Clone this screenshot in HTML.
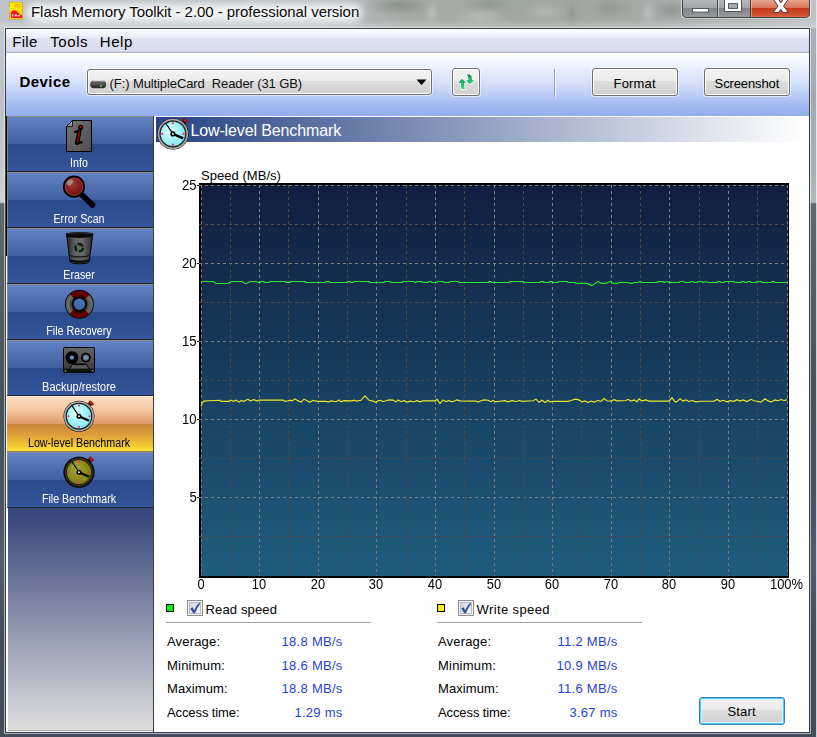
<!DOCTYPE html>
<html><head><meta charset="utf-8"><title>Flash Memory Toolkit</title>
<style>
html,body{margin:0;padding:0;}
body{width:817px;height:737px;overflow:hidden;position:relative;background:#4a5558;font-family:"Liberation Sans",sans-serif;}
.abs{position:absolute;}
.t{position:absolute;white-space:pre;line-height:1;font-family:"Liberation Sans",sans-serif;color:#000;}
.btn{position:absolute;box-sizing:border-box;border:1px solid #707070;border-radius:3px;background:linear-gradient(#f3f3f3 0%,#ebebeb 46%,#dddddd 48%,#cfcfcf 100%);box-shadow:inset 0 0 0 1px #fcfcfc, 0 0 0 1px rgba(255,255,255,.55);}
.sb{position:absolute;left:7px;width:146px;height:56px;}
.sb .bg{position:absolute;left:0;top:0;width:146px;height:56px;background:linear-gradient(#8c8c8c 0,#8c8c8c 1px,#6282c4 1px,#4160a2 28px,#2b4a8b 28px,#36559b 55px,#26262c 55px,#26262c 56px);}
.sb .bg:after{content:"";position:absolute;left:0;top:0;width:1px;height:55px;background:#8a8680;}
.sb.sel .bg{background:linear-gradient(#fff1e2 0,#fff1e2 1px,#fbddc2 1px,#f5c8a2 13px,#de9a68 28px,#c9853c 28px,#dfa23a 40px,#f2c834 49px,#fbe034 55px,#84846c 55px,#84846c 56px);}
.sb.sel .bg:after{display:none;}
.sb svg{position:absolute;left:0;top:0;}
.lab{position:absolute;left:-1px;width:146px;text-align:center;top:41px;font-size:12px;line-height:12px;color:#fff;white-space:pre;transform:scaleX(.89);}
.sl{font-size:13px;}
.sv{font-size:13px;color:#1f3fe0;}
</style></head><body>
<!-- window frame (aero glass) -->
<div class="abs" style="left:0;top:0;width:817px;height:737px;background:linear-gradient(#c4ccd4 0px,#bcc2c8 100px,#c6c9cc 170px,#d2d4d6 202px,#5e6a6c 204px,#566264 260px,#46525a 400px,#4a5462 520px,#525c6c 560px,#424e58 640px,#444e5a 737px);"></div>
<div class="abs" style="left:0;top:0;width:817px;height:28px;background:linear-gradient(90deg,#bcc2c8 0px,#b8bec4 40px,#b6bcc0 330px,#a8aca8 400px,#a0a6a0 520px,#a6aaa7 640px,#aeb2b0 700px,#bec2c4 817px);"></div>
<div class="abs" style="left:0;top:19px;width:817px;height:9px;background:linear-gradient(rgba(255,255,255,0),rgba(255,255,255,.28));"></div>
<div class="abs" style="left:26px;top:4px;width:336px;height:18px;border-radius:9px;background:rgba(255,255,255,.82);filter:blur(5px);"></div>
<div class="abs" style="left:360px;top:0;width:330px;height:28px;overflow:hidden;">
 <div class="abs" style="left:0;top:0;width:330px;height:28px;filter:blur(2.5px);background:
  radial-gradient(ellipse 34px 10px at 40px 5px,rgba(118,128,116,.7),rgba(118,128,116,0) 100%),
  radial-gradient(ellipse 5px 16px at 72px 14px,rgba(206,210,210,.75),rgba(206,210,210,0) 100%),
  radial-gradient(ellipse 30px 9px at 120px 17px,rgba(196,200,196,.7),rgba(196,200,196,0) 100%),
  radial-gradient(ellipse 24px 8px at 128px 4px,rgba(124,134,124,.55),rgba(124,134,124,0) 100%),
  radial-gradient(ellipse 26px 10px at 185px 12px,rgba(190,194,190,.6),rgba(190,194,190,0) 100%),
  radial-gradient(ellipse 5px 15px at 212px 14px,rgba(120,130,124,.55),rgba(120,130,124,0) 100%),
  radial-gradient(ellipse 22px 9px at 250px 8px,rgba(128,138,128,.6),rgba(128,138,128,0) 100%),
  radial-gradient(ellipse 6px 16px at 288px 14px,rgba(204,208,208,.7),rgba(204,208,208,0) 100%),
  radial-gradient(ellipse 18px 10px at 312px 10px,rgba(122,130,126,.6),rgba(122,130,126,0) 100%);"></div>
</div>
<div class="abs" style="left:811px;top:28px;width:5px;height:175px;background:rgba(40,50,50,.16);"></div>
<div class="abs" style="left:816px;top:0;width:1px;height:737px;background:rgba(235,240,245,.8);"></div>
<!-- inner frame edges -->
<div class="abs" style="left:4px;top:27px;width:807px;height:707px;box-sizing:border-box;border:1px solid rgba(238,241,245,.62);"></div>
<div class="abs" style="left:5px;top:28px;width:805px;height:705px;box-sizing:border-box;border:1px solid #3a3f44;"></div>
<!-- app icon -->
<svg class="abs" style="left:8px;top:1px" width="17" height="20" viewBox="8 1 17 20">
 <defs><linearGradient id="gsd" x1="0" y1="0" x2="1" y2="1"><stop offset="0" stop-color="#fff200"/><stop offset=".6" stop-color="#ffe000"/><stop offset="1" stop-color="#ffc400"/></linearGradient></defs>
 <path d="M9.3 2 L21 2 L22.8 3.8 L22.8 19.6 L9.3 19.6 Z" fill="#a8ac10"/>
 <path d="M9.9 2.5 L20.8 2.5 L22.2 3.9 L22.2 19 L9.9 19 Z" fill="url(#gsd)"/>
 <path d="M10.8 18 L10.8 12.6 Q12.6 9.4 15.4 10.6 Q17.4 11.6 18.4 13.2 Q20 15 22 15.2 L22 18 Z" fill="#fb0c10"/>
 <rect x="12" y="14.2" width="1.2" height="2.2" fill="#fff"/><rect x="13.8" y="15.6" width=".7" height=".8" fill="#fff"/><rect x="15" y="14.2" width="1.8" height="2.2" rx=".6" fill="#fff"/><rect x="17.4" y="14.9" width="2.6" height="1.5" rx=".5" fill="#ffd0c8"/>
 <path d="M14.6 5.2 Q16.4 4 19 4.6 M19.4 4.6 Q20.8 5 20 6.4 Q19.4 7 18.4 6.8 M14.8 6.4 Q16 5.6 17.6 6" stroke="#ff9a10" stroke-width=".9" fill="none"/>
 <rect x="10.8" y="8.2" width="4" height=".5" fill="#b8a800" opacity=".8"/>
 <rect x="9" y="7" width=".9" height="2.6" fill="#d8dce8" opacity=".9"/>
</svg>
<div class="t" style="left:31px;top:3.5px;font-size:15px;letter-spacing:-0.05px;color:#0a0a0a;text-shadow:0 0 6px #fff,0 0 10px #fff;">Flash Memory Toolkit - 2.00 - professional version</div>
<!-- caption buttons -->
<svg class="abs" style="left:677px;top:0" width="140" height="24" viewBox="677 0 140 24">
 <defs>
  <linearGradient id="cbg" x1="0" y1="0" x2="0" y2="1"><stop offset="0" stop-color="#b4b8ba"/><stop offset=".44" stop-color="#a2a6a8"/><stop offset=".45" stop-color="#7e8588"/><stop offset="1" stop-color="#9a9ea0"/></linearGradient>
  <linearGradient id="cbr" x1="0" y1="0" x2="0" y2="1"><stop offset="0" stop-color="#e6a38c"/><stop offset=".44" stop-color="#d9755a"/><stop offset=".45" stop-color="#c4391a"/><stop offset=".8" stop-color="#d0502e"/><stop offset="1" stop-color="#dc6c48"/></linearGradient>
  <clipPath id="cbclip"><path d="M682 -2 H810 V13 Q810 17.5 805.5 17.5 H686.5 Q682 17.5 682 13 Z"/></clipPath>
 </defs>
 <path d="M681 -2 H811 V13.5 Q811 18.5 806 18.5 H686 Q681 18.5 681 13.5 Z" fill="rgba(255,255,255,.55)"/>
 <g clip-path="url(#cbclip)">
  <rect x="682" y="0" width="68.5" height="18" fill="url(#cbg)"/>
  <rect x="750.5" y="0" width="60" height="18" fill="url(#cbr)"/>
 </g>
 <path d="M682.5 -2 V13 Q682.5 17.5 687 17.5 H805 Q809.5 17.5 809.5 13 V-2" fill="none" stroke="#43484c" stroke-width="1"/>
 <path d="M717.5 0 V17" stroke="#4a4e52" stroke-width="1"/><path d="M718.5 0 V17" stroke="rgba(255,255,255,.45)" stroke-width="1"/>
 <path d="M750.5 0 V17" stroke="#5a3028" stroke-width="1"/><path d="M751.5 0 V17" stroke="rgba(255,220,210,.45)" stroke-width="1"/>
 <rect x="692.5" y="8.5" width="16" height="3.6" fill="#fff" stroke="#51585e" stroke-width="1"/>
 <path d="M724.5 -2 H741.5 V11.5 H724.5 Z M728.5 3.5 V8.5 H737.5 V3.5 Z" fill="#fff" fill-rule="evenodd" stroke="#51585e" stroke-width="1"/>
 <path d="M773.2 -1 L778.4 -1 L780.8 3 L783.2 -1 L788.4 -1 L783.6 6 L788.6 12.6 L783 12.6 L780.8 9.4 L778.6 12.6 L773 12.6 L778 6 Z" fill="#fff" stroke="#5a342c" stroke-width="1" stroke-linejoin="round"/>
</svg>
<!-- client area -->
<div class="abs" style="left:6px;top:29px;width:803px;height:703px;background:#fff;"></div>
<!-- menu bar -->
<div class="abs" style="left:6px;top:29px;width:803px;height:24px;background:linear-gradient(#ffffff 0,#f1f3fa 5px,#e9ecf6 9px,#dde1f0 9px,#d9ddee 22px,#b4bace 23px,#b4bace 24px);"></div>
<div class="t" style="left:12.2px;top:34px;font-size:15px;letter-spacing:0.3px;">File</div>
<div class="t" style="left:50.3px;top:34px;font-size:15px;letter-spacing:0.55px;">Tools</div>
<div class="t" style="left:99.8px;top:34px;font-size:15px;letter-spacing:0.55px;">Help</div>
<!-- toolbar -->
<div class="abs" style="left:6px;top:53px;width:803px;height:63px;background:linear-gradient(#ffffff 0,#f4f7fe 8px,#d5e0fa 30px,#acc1f4 48px,#92adee 63px);"></div>
<div class="t" style="left:19.4px;top:74px;font-size:15px;font-weight:bold;letter-spacing:0.45px;">Device</div>
<!-- combo -->
<div class="btn" style="left:87px;top:69px;width:345px;height:26px;"></div>
<svg class="abs" style="left:88px;top:77px" width="20" height="14" viewBox="88 77 20 14">
 <defs><linearGradient id="gdrv" x1="0" y1="0" x2="0" y2="1"><stop offset="0" stop-color="#8a8a8a"/><stop offset=".35" stop-color="#4a4a4a"/><stop offset="1" stop-color="#2a2a2a"/></linearGradient></defs>
 <path d="M93.4 80.2 H103 Q105.6 80.6 106.2 84 Q106.4 87.4 103.6 88.2 H92.8 Q90 87.4 90.2 84 Q90.8 80.6 93.4 80.2 Z" fill="url(#gdrv)"/>
 <path d="M93 81 Q98.2 80 103.4 81" stroke="#e4e4e4" stroke-width="1.1" fill="none"/>
 <path d="M91.4 84.4 Q98.2 83.2 105 84.4" stroke="#7a7a7a" stroke-width=".7" fill="none"/>
 <rect x="100" y="85.2" width="2" height="1.4" fill="#30f040"/>
</svg>
<div class="t" style="left:109.6px;top:76.5px;font-size:13px;letter-spacing:-0.1px;color:#101010;">(F:) MultipleCard  Reader (31 GB)</div>
<svg class="abs" style="left:416px;top:79px" width="12" height="8" viewBox="0 0 12 8"><path d="M0.5 0.5 L10.5 0.5 L5.5 6 Z" fill="#000"/></svg>
<!-- refresh button -->
<div class="btn" style="left:452px;top:68px;width:28px;height:28px;"></div>
<svg class="abs" style="left:452px;top:68px" width="28" height="28" viewBox="452 68 28 28">
 <defs><linearGradient id="garr" x1="0" y1="0" x2="0" y2="1"><stop offset="0" stop-color="#1f9c58"/><stop offset="1" stop-color="#34d684"/></linearGradient>
 <linearGradient id="garr2" x1="0" y1="0" x2="0" y2="1"><stop offset="0" stop-color="#0c6a34"/><stop offset=".4" stop-color="#22b468"/><stop offset="1" stop-color="#2cc878"/></linearGradient></defs>
 <g stroke="#fff" stroke-width="1.6" stroke-linejoin="round" opacity=".95">
  <path d="M462 78.8 L466.2 83 L464.2 83 L464.2 86.4 Q464.4 88 465.4 89 L462 89 Q461 87.6 461 86 L461 83 L458 83 Z" fill="#fff"/>
  <path d="M466.8 74.2 Q469.6 74.2 471 75.6 Q471.9 76.8 471.9 78.4 L471.9 80.2 L474.4 80.2 L469.7 84.2 L465.7 80.2 L468.4 80.2 L468.4 78.4 Q468.4 76 466.8 74.2 Z" fill="#fff"/>
 </g>
 <path d="M462 78.8 L466.2 83 L464.2 83 L464.2 86.4 Q464.4 88 465.4 89 L462 89 Q461 87.6 461 86 L461 83 L458 83 Z" fill="url(#garr)"/>
 <path d="M466.8 74.2 Q469.6 74.2 471 75.6 Q471.9 76.8 471.9 78.4 L471.9 80.2 L474.4 80.2 L469.7 84.2 L465.7 80.2 L468.4 80.2 L468.4 78.4 Q468.4 76 466.8 74.2 Z" fill="url(#garr2)"/>
</svg>
<!-- separator -->
<div class="abs" style="left:554px;top:69px;width:1px;height:28px;background:#9aa0a8;"></div>
<div class="abs" style="left:555px;top:69px;width:1px;height:28px;background:#f4f6fc;"></div>
<!-- buttons -->
<div class="btn" style="left:592px;top:68px;width:86px;height:28px;"></div>
<div class="t" style="left:613.6px;top:76.5px;font-size:13px;letter-spacing:0.15px;">Format</div>
<div class="btn" style="left:704px;top:68px;width:86px;height:28px;"></div>
<div class="t" style="left:714.6px;top:76.5px;font-size:13px;letter-spacing:-0.12px;">Screenshot</div>
<!-- sidebar -->
<div class="abs" style="left:6px;top:116px;width:1px;height:616px;background:linear-gradient(#000 0,#000 140px,#fff 140px,#fff 616px);"></div>
<div class="abs" style="left:7px;top:116px;width:146px;height:616px;background:linear-gradient(#33508e 0,#33508e 392px,#34437a 393px,#dedede 614px,#a6a6a6 614px,#a6a6a6 615px,#fff 615px,#fff 616px);"></div><div class="abs" style="left:7px;top:508px;width:1px;height:224px;background:#fff;"></div>
<div class="abs" style="left:153px;top:116px;width:1px;height:616px;background:#3c3c40;"></div>
<svg width="0" height="0" style="position:absolute"><defs>
 <linearGradient id="gpage" x1="0" y1="0" x2="1" y2="1"><stop offset="0" stop-color="#767676"/><stop offset="1" stop-color="#4c4c4c"/></linearGradient>
 <radialGradient id="gred" cx=".4" cy=".35" r=".7"><stop offset="0" stop-color="#a04040"/><stop offset=".6" stop-color="#861818"/><stop offset="1" stop-color="#700a0a"/></radialGradient>
 <linearGradient id="gcan" x1="0" y1="0" x2="1" y2="0"><stop offset="0" stop-color="#202020"/><stop offset=".32" stop-color="#626262"/><stop offset=".6" stop-color="#6a6a6a"/><stop offset="1" stop-color="#262626"/></linearGradient>
 <radialGradient id="gring" gradientUnits="userSpaceOnUse" cx="72.4" cy="20.2" r="14.4"><stop offset=".44" stop-color="#000"/><stop offset=".62" stop-color="#505050"/><stop offset=".76" stop-color="#6c6c6c"/><stop offset=".9" stop-color="#606060"/><stop offset="1" stop-color="#2c2c2c"/></radialGradient>
 <radialGradient id="gringr" gradientUnits="userSpaceOnUse" cx="72.4" cy="20.2" r="14.4"><stop offset=".44" stop-color="#0c0000"/><stop offset=".62" stop-color="#4c0000"/><stop offset=".76" stop-color="#6c0000"/><stop offset=".9" stop-color="#5a0000"/><stop offset="1" stop-color="#240000"/></radialGradient>
 <linearGradient id="gtape" x1="0" y1="0" x2="0" y2="1"><stop offset="0" stop-color="#626262"/><stop offset="1" stop-color="#383838"/></linearGradient>
 <radialGradient id="gface" cx=".4" cy=".4" r=".65"><stop offset="0" stop-color="#e8ffff"/><stop offset=".5" stop-color="#a8f4f8"/><stop offset="1" stop-color="#7ee6f0"/></radialGradient>
 <radialGradient id="gfacey" cx=".4" cy=".4" r=".65"><stop offset="0" stop-color="#a4a43a"/><stop offset=".6" stop-color="#8c8c1c"/><stop offset="1" stop-color="#74740c"/></radialGradient>
 <g id="watch">
  <path d="M9.2 -12.6 L11.6 -10.2" stroke="#222" stroke-width="2.4"/>
  <path d="M10.6 -14.6 L13.8 -11.4 L12.4 -10 L9.2 -13.2 Z" fill="#e01414" stroke="#400" stroke-width=".7"/>
  <circle r="14.6" fill="#111"/>
  <circle r="13.4" fill="none" stroke="#a8a8a8" stroke-width="1.6"/>
  <circle r="11.9" fill="none" stroke="#333" stroke-width=".9"/>
 </g>
 <g id="hands">
  <circle cx="0" cy="-10" r="1" fill="#ff2878"/><circle cx="0" cy="10" r="1" fill="#ff2878"/><circle cx="-10" cy="0" r="1" fill="#ff2878"/><circle cx="10" cy="0" r="1" fill="#ff2878"/>
  <path d="M0 0 L-6.8 -10.2" stroke="#000" stroke-width="1.1"/>
  <path d="M0 0 L9.6 4.2" stroke="#000" stroke-width="2.1"/>
  <circle r="2.4" fill="#000"/><circle r=".9" fill="#fff"/>
 </g>
</defs></svg>

<div class="sb" style="top:116px"><div class="bg"></div>
 <svg width="146" height="56" viewBox="0 0 146 56">
  <path d="M59.5 10.5 L65.5 4.5 L84.5 4.5 L84.5 35.5 L59.5 35.5 Z" fill="url(#gpage)" stroke="#000"/>
  <path d="M59.5 10.5 L65.5 10.5 L65.5 4.5 Z" fill="#9a9a9a" stroke="#000" stroke-width=".8"/>
  <circle cx="73.7" cy="11.4" r="2.6" fill="#000"/><ellipse cx="73.5" cy="10.9" rx="1.3" ry=".85" fill="#d00a0a"/>
  <path d="M72.5 15.4 L70.1 26.8" stroke="#000" stroke-width="4.3" stroke-linecap="round"/>
  <path d="M68.2 15.9 L72.4 15" stroke="#000" stroke-width="2.4" stroke-linecap="round"/>
  <path d="M70.4 27 L74.6 26.2" stroke="#000" stroke-width="2.4" stroke-linecap="round"/>
  <path d="M72.4 15.8 L70.3 26.2" stroke="#960404" stroke-width="1.7" stroke-linecap="round"/>
 </svg><div class="lab">Info</div></div>

<div class="sb" style="top:172px"><div class="bg"></div>
 <svg width="146" height="56" viewBox="0 0 146 56">
  <path d="M74 22 L85.4 32.8" stroke="#000" stroke-width="5.8" stroke-linecap="round"/>
  <circle cx="67" cy="14.7" r="10.2" fill="url(#gred)" stroke="#000" stroke-width="1.8"/>
  <circle cx="67" cy="14.7" r="8.7" fill="none" stroke="#b06060" stroke-width=".7" opacity=".7"/>
  <ellipse cx="63" cy="10.5" rx="3.4" ry="2.4" transform="rotate(-40 63 10.5)" fill="#9a9a90" opacity=".85"/>
 </svg><div class="lab">Error Scan</div></div>

<div class="sb" style="top:228px"><div class="bg"></div>
 <svg width="146" height="56" viewBox="0 0 146 56">
  <path d="M59.6 6 L85.8 6 L82.4 32.4 Q82 34.6 79.6 35.2 Q72.6 36.6 65.6 35.2 Q63.2 34.6 62.8 32.4 Z" fill="url(#gcan)" stroke="#000" stroke-width="1"/>
  <path d="M59 5.2 Q72.6 2.6 86.2 5.2 L86 8.6 Q72.6 11.2 59.2 8.6 Z" fill="#0a0a0a"/>
  <path d="M61 5.6 Q72.6 4 84.2 5.6" stroke="#3a3a3a" stroke-width=".8" fill="none"/>
  <path d="M62.4 27.6 Q72.6 30.2 82.8 27.6" stroke="#161616" stroke-width="1.3" fill="none"/>
  <path d="M62.8 31.2 Q72.6 34 82.4 31.2 L82 33.6 Q72.6 36.6 63.2 33.6 Z" fill="#0c0c0c"/>
  <path d="M64.4 30 Q72.6 32 80.8 30" stroke="#4a4a4a" stroke-width=".7" fill="none"/>
  <circle cx="72.1" cy="19.7" r="3.7" fill="none" stroke="#062406" stroke-width="2.4" stroke-dasharray="5.9 1.85"/>
  
 </svg><div class="lab">Eraser</div></div>

<div class="sb" style="top:284px"><div class="bg"></div>
 <svg width="146" height="56" viewBox="0 0 146 56">
  <circle cx="72.4" cy="20.2" r="10.15" fill="none" stroke="#000" stroke-width="8.7"/>
  <circle cx="72.4" cy="20.2" r="10.15" fill="none" stroke="url(#gring)" stroke-width="7.3"/>
  <circle cx="72.4" cy="20.2" r="10.15" fill="none" stroke="url(#gringr)" stroke-width="7.3" stroke-dasharray="15.944 15.944" stroke-dashoffset="-7.972"/>
 </svg><div class="lab">File Recovery</div></div>

<div class="sb" style="top:340px"><div class="bg"></div>
 <svg width="146" height="56" viewBox="0 0 146 56">
  <rect x="56.5" y="7.5" width="31" height="25" rx="1" fill="url(#gtape)" stroke="#000"/>
  <rect x="57" y="28.6" width="30" height="3.6" fill="#101010"/>
  <rect x="60" y="29.6" width="24" height=".8" fill="#0c220c"/>
  <circle cx="58.4" cy="30.8" r=".9" fill="#8a8a8a"/><circle cx="85.6" cy="30.8" r=".9" fill="#8a8a8a"/>
  <path d="M62.6 28.6 L65.2 24.4 L79.4 24.4 L82 28.6" fill="#5a5a5a" stroke="#000" stroke-width="1"/>
  <path d="M68 24.4 L77 24.4" stroke="#000" stroke-width="1.6"/>
  <circle cx="64.9" cy="17.6" r="6.4" fill="#000"/>
  <circle cx="64.9" cy="17.6" r="2.1" fill="#6a92d2"/>
  <circle cx="78.9" cy="17.6" r="4" fill="#6a6a6a" stroke="#000" stroke-width="1.7"/>
  <circle cx="78.9" cy="17.6" r="2" fill="#6a92d2"/>
 </svg><div class="lab" style="transform:scaleX(.915)">Backup/restore</div></div>

<div class="sb sel" style="top:396px"><div class="bg"></div>
 <svg width="146" height="56" viewBox="0 0 146 56">
  <g transform="translate(72 20.2) scale(1.06)"><use href="#watch"/><circle r="11.4" fill="url(#gface)"/>
   <path d="M-7.5 -4 Q-5 -8 -1 -8.6 Q-5 -6.4 -7.5 -4 Z" fill="#fff" opacity=".9"/><path d="M3 7.8 Q6.4 6.6 7.8 3.4 Q6.4 8 3 7.8 Z" fill="#fff" opacity=".9"/>
   <use href="#hands"/></g>
 </svg><div class="lab" style="color:#000">Low-level Benchmark</div></div>

<div class="sb" style="top:452px"><div class="bg"></div>
 <svg width="146" height="56" viewBox="0 0 146 56">
  <g transform="translate(72 20.2) scale(1.06)"><use href="#watch"/><circle r="14.6" fill="#0c0c0c"/><circle r="12.6" fill="none" stroke="#3a3a20" stroke-width="1.2"/><circle r="11.4" fill="url(#gfacey)"/>
   <path d="M-7.5 -4 Q-5 -8 -1 -8.6 Q-5 -6.4 -7.5 -4 Z" fill="#c8c870" opacity=".8"/><path d="M3 7.8 Q6.4 6.6 7.8 3.4 Q6.4 8 3 7.8 Z" fill="#c8c870" opacity=".8"/>
   <use href="#hands"/></g>
 </svg><div class="lab">File Benchmark</div></div>
<!-- main panel header -->
<div class="abs" style="left:156px;top:117px;width:652px;height:25px;background:linear-gradient(90deg,#294684 0px,#2f4b88 30px,#ffffff 648px);"></div>
<svg class="abs" style="left:156px;top:117px" width="36" height="36" viewBox="0 0 36 36"><g transform="translate(16.9 16.9)"><g transform="scale(1.07)"><use href="#watch"/><circle r="11.4" fill="url(#gface)"/><path d="M-7.5 -4 Q-5 -8 -1 -8.6 Q-5 -6.4 -7.5 -4 Z" fill="#fff" opacity=".9"/><path d="M3 7.8 Q6.4 6.6 7.8 3.4 Q6.4 8 3 7.8 Z" fill="#fff" opacity=".9"/><use href="#hands"/></g></g></svg>
<div class="t" style="left:190.4px;top:122.5px;font-size:16px;letter-spacing:-0.12px;color:#fff;">Low-level Benchmark</div>
<div class="t" style="left:201px;top:169px;font-size:13px;letter-spacing:0.04px;">Speed (MB/s)</div>
<div class="abs" style="left:199px;top:183px;width:590px;height:395px;background:#000;"></div>
<div class="abs" style="left:201px;top:185px;width:587px;height:391px;background:linear-gradient(#111f3f 0%,#1f5d7e 100%);"></div>
<svg class="abs" style="left:0;top:0" width="817" height="737" viewBox="0 0 817 737" shape-rendering="crispEdges">
<defs><linearGradient id="gmaj" gradientUnits="userSpaceOnUse" x1="0" y1="185" x2="0" y2="575"><stop offset="0" stop-color="#808080"/><stop offset="1" stop-color="#787878"/></linearGradient><linearGradient id="gmnr" gradientUnits="userSpaceOnUse" x1="0" y1="185" x2="0" y2="575"><stop offset="0" stop-color="#574b40"/><stop offset=".5" stop-color="#504844"/><stop offset="1" stop-color="#484846"/></linearGradient></defs>
<path d="M199 185.5 H788" stroke="url(#gmaj)" stroke-width="1" stroke-dasharray="3 3"/>
<path d="M199 224.5 H788" stroke="url(#gmnr)" stroke-width="1" stroke-dasharray="3 3"/>
<path d="M199 263.5 H788" stroke="url(#gmaj)" stroke-width="1" stroke-dasharray="3 3"/>
<path d="M199 302.5 H788" stroke="url(#gmnr)" stroke-width="1" stroke-dasharray="3 3"/>
<path d="M199 341.5 H788" stroke="url(#gmaj)" stroke-width="1" stroke-dasharray="3 3"/>
<path d="M199 380.5 H788" stroke="url(#gmnr)" stroke-width="1" stroke-dasharray="3 3"/>
<path d="M199 419.5 H788" stroke="url(#gmaj)" stroke-width="1" stroke-dasharray="3 3"/>
<path d="M199 458.5 H788" stroke="url(#gmnr)" stroke-width="1" stroke-dasharray="3 3"/>
<path d="M199 497.5 H788" stroke="url(#gmaj)" stroke-width="1" stroke-dasharray="3 3"/>
<path d="M199 536.5 H788" stroke="url(#gmnr)" stroke-width="1" stroke-dasharray="3 3"/>
<path d="M230.5 185 V576" stroke="url(#gmnr)" stroke-width="1" stroke-dasharray="3 3"/>
<path d="M259.5 185 V576" stroke="url(#gmaj)" stroke-width="1" stroke-dasharray="3 3"/>
<path d="M288.5 185 V576" stroke="url(#gmnr)" stroke-width="1" stroke-dasharray="3 3"/>
<path d="M318.5 185 V576" stroke="url(#gmaj)" stroke-width="1" stroke-dasharray="3 3"/>
<path d="M347.5 185 V576" stroke="url(#gmnr)" stroke-width="1" stroke-dasharray="3 3"/>
<path d="M376.5 185 V576" stroke="url(#gmaj)" stroke-width="1" stroke-dasharray="3 3"/>
<path d="M406.5 185 V576" stroke="url(#gmnr)" stroke-width="1" stroke-dasharray="3 3"/>
<path d="M435.5 185 V576" stroke="url(#gmaj)" stroke-width="1" stroke-dasharray="3 3"/>
<path d="M464.5 185 V576" stroke="url(#gmnr)" stroke-width="1" stroke-dasharray="3 3"/>
<path d="M494.5 185 V576" stroke="url(#gmaj)" stroke-width="1" stroke-dasharray="3 3"/>
<path d="M523.5 185 V576" stroke="url(#gmnr)" stroke-width="1" stroke-dasharray="3 3"/>
<path d="M552.5 185 V576" stroke="url(#gmaj)" stroke-width="1" stroke-dasharray="3 3"/>
<path d="M581.5 185 V576" stroke="url(#gmnr)" stroke-width="1" stroke-dasharray="3 3"/>
<path d="M611.5 185 V576" stroke="url(#gmaj)" stroke-width="1" stroke-dasharray="3 3"/>
<path d="M640.5 185 V576" stroke="url(#gmnr)" stroke-width="1" stroke-dasharray="3 3"/>
<path d="M669.5 185 V576" stroke="url(#gmaj)" stroke-width="1" stroke-dasharray="3 3"/>
<path d="M699.5 185 V576" stroke="url(#gmnr)" stroke-width="1" stroke-dasharray="3 3"/>
<path d="M728.5 185 V576" stroke="url(#gmaj)" stroke-width="1" stroke-dasharray="3 3"/>
<path d="M757.5 185 V576" stroke="url(#gmnr)" stroke-width="1" stroke-dasharray="3 3"/>
<path d="M787.5 185 V576" stroke="url(#gmaj)" stroke-width="1" stroke-dasharray="3 3"/>
<path d="M201.5 185 V576" stroke="url(#gmaj)" stroke-width="1" stroke-dasharray="3 3"/>
<rect x="197" y="185" width="2" height="1" fill="#000"/>
<rect x="197" y="263" width="2" height="1" fill="#000"/>
<rect x="197" y="341" width="2" height="1" fill="#000"/>
<rect x="197" y="419" width="2" height="1" fill="#000"/>
<rect x="197" y="497" width="2" height="1" fill="#000"/>
</svg>
<svg class="abs" style="left:0;top:0" width="817" height="737" viewBox="0 0 817 737">
<path d="M201 281.5 L213 281.5 L216 283.5 L228 283.5 L231 281.5 L242 281.5 L245 283.5 L247 283.3 L250 281.5 L256 281.5 L258 282.4 L260 282.4 L261 281.5 L264 281.5 L265 282.5 L269 282.5 L270 281.5 L285 281.5 L286 282.5 L290 282.5 L291 281.5 L305 281.5 L306 282.5 L325 282.5 L326 281.5 L329 281.5 L330 282.5 L347 282.5 L348 281.5 L350 281.5 L351 282.5 L353 282.5 L354 281.5 L369 281.5 L370 282.5 L384 282.5 L385 281.5 L390 281.5 L391 282.5 L402 282.5 L403 281.5 L414 281.5 L415 282.5 L416 282.5 L417 281.5 L422 281.5 L423 282.5 L428 282.5 L429 281.5 L431 281.5 L432 282.5 L437 282.5 L438 281.5 L443 281.5 L444 282.5 L449 282.5 L450 281.5 L458 281.5 L459 282.5 L488 282.5 L489 281.5 L491 281.5 L492 282.5 L509 282.5 L510 281.5 L523 281.5 L524 282.5 L540 282.5 L541 281.5 L543 281.5 L544 282.5 L549 282.5 L550 281.5 L552 281.5 L553 282.5 L558 282.5 L559 281.5 L567 281.5 L568 282.5 L575 282.5 L576 283.4 L587 283.4 L592 285.6 L598 281.4 L601 283.4 L606 283.4 L608 282.2 L611 281.4 L613 283.2 L617 283.4 L619 282.5 L628 282.5 L630 283.4 L632 283.4 L634 282.5 L638 282.5 L640 281.5 L642 282.5 L657 282.5 L658 281.5 L663 281.5 L664 282.5 L667 281.5 L669 282.5 L679 282.5 L680 281.5 L684 281.5 L685 282.5 L690 282.5 L691 281.5 L693 281.5 L694 282.5 L697 282.5 L698 281.5 L702 281.5 L703 282.5 L706 281.5 L708 282.5 L717 282.5 L718 281.5 L720 281.5 L721 282.5 L724 282.5 L725 281.5 L734 281.5 L735 282.5 L741 282.5 L742 281.5 L744 281.5 L745 282.5 L747 282.5 L748 281.5 L750 281.5 L751 282.5 L756 282.5 L757 281.5 L761 281.5 L762 282.5 L771 282.5 L772 281.5 L774 281.5 L775 282.5 L787 282.5" fill="none" stroke="#26ec2e" stroke-width="1.15"/>
<path d="M201 406.3 L202 403.0 L204 401.1 L208 400.7 L220 400.3 L221 401.3 L229 401.3 L231 400.1 L233 401.3 L236 400.1 L239 402.1 L241 400.7 L244 401.3 L248 399.1 L250 400.9 L254 399.7 L257 401.1 L259 400.1 L283 400.1 L285 401.3 L288 400.7 L290 400.1 L292 400.9 L295 398.9 L297 400.3 L301 402.1 L304 399.1 L307 400.7 L310 402.3 L313 400.3 L317 401.3 L326 401.3 L328 402.1 L331 400.9 L336 401.7 L339 399.9 L341 401.9 L344 400.7 L352 400.9 L354 400.1 L356 401.1 L361 400.3 L365 395.9 L369 400.3 L373 401.1 L376 402.3 L378 400.9 L381 400.3 L383 401.7 L386 400.7 L389 399.9 L393 400.1 L396 401.9 L398 399.9 L401 401.7 L404 400.7 L407 402.1 L410 401.1 L414 401.7 L417 400.7 L420 401.9 L423 400.9 L435 400.9 L437 399.3 L440 403.5 L443 399.9 L446 401.7 L449 400.5 L452 401.9 L455 400.7 L457 399.9 L460 400.9 L476 401.1 L478 402.1 L481 400.7 L484 399.9 L488 400.3 L491 401.7 L493 400.5 L496 401.9 L500 401.3 L505 400.7 L508 401.9 L512 400.7 L516 401.5 L519 400.5 L522 401.3 L533 400.7 L536 399.1 L539 402.3 L542 400.3 L545 402.5 L548 400.3 L550 401.9 L553 401.3 L568 401.3 L571 400.5 L575 399.1 L579 399.9 L582 401.9 L585 400.9 L588 402.5 L591 401.1 L594 402.1 L598 400.5 L601 401.3 L604 398.5 L607 400.7 L611 401.1 L614 399.7 L617 400.9 L626 400.5 L628 399.3 L631 401.1 L634 399.9 L637 401.7 L639 398.9 L642 400.9 L646 399.9 L649 401.1 L669 401.1 L672 397.7 L675 401.9 L677 401.7 L680 398.7 L683 401.1 L686 399.9 L689 401.5 L692 400.5 L696 401.9 L700 401.3 L714 401.1 L717 399.5 L720 401.3 L723 400.3 L727 401.9 L730 400.7 L734 401.3 L737 399.7 L740 401.1 L743 399.9 L747 401.5 L751 399.3 L754 400.7 L757 401.3 L761 402.1 L765 398.7 L768 400.9 L771 401.9 L775 399.9 L778 400.7 L781 399.5 L784 400.5 L787 399.9" fill="none" stroke="#f0e628" stroke-width="1.15"/>
</svg>
<div class="t" style="right:620.2px;top:177.5px;font-size:14px;transform:scaleX(.94);transform-origin:100% 50%;">25</div>
<div class="t" style="right:620.2px;top:255.5px;font-size:14px;transform:scaleX(.94);transform-origin:100% 50%;">20</div>
<div class="t" style="right:620.2px;top:333.5px;font-size:14px;transform:scaleX(.94);transform-origin:100% 50%;">15</div>
<div class="t" style="right:620.2px;top:411.5px;font-size:14px;transform:scaleX(.94);transform-origin:100% 50%;">10</div>
<div class="t" style="right:620.2px;top:489.5px;font-size:14px;transform:scaleX(.94);transform-origin:100% 50%;">5</div>
<div class="t" style="left:180.6px;width:40px;text-align:center;top:576.5px;font-size:14px;transform:scaleX(.92);">0</div>
<div class="t" style="left:239.2px;width:40px;text-align:center;top:576.5px;font-size:14px;transform:scaleX(.92);">10</div>
<div class="t" style="left:297.8px;width:40px;text-align:center;top:576.5px;font-size:14px;transform:scaleX(.92);">20</div>
<div class="t" style="left:356.4px;width:40px;text-align:center;top:576.5px;font-size:14px;transform:scaleX(.92);">30</div>
<div class="t" style="left:415.0px;width:40px;text-align:center;top:576.5px;font-size:14px;transform:scaleX(.92);">40</div>
<div class="t" style="left:473.6px;width:40px;text-align:center;top:576.5px;font-size:14px;transform:scaleX(.92);">50</div>
<div class="t" style="left:532.2px;width:40px;text-align:center;top:576.5px;font-size:14px;transform:scaleX(.92);">60</div>
<div class="t" style="left:590.8px;width:40px;text-align:center;top:576.5px;font-size:14px;transform:scaleX(.92);">70</div>
<div class="t" style="left:649.4px;width:40px;text-align:center;top:576.5px;font-size:14px;transform:scaleX(.92);">80</div>
<div class="t" style="left:708.0px;width:40px;text-align:center;top:576.5px;font-size:14px;transform:scaleX(.92);">90</div>
<div class="t" style="left:770px;top:576.5px;font-size:14px;transform:scaleX(.92);transform-origin:0 50%;">100%</div>
<div class="abs" style="left:166px;top:604px;width:8px;height:8px;box-sizing:border-box;border:1px solid #000;background:#00ff00;"></div>
<div class="abs" style="left:187px;top:600px;width:16px;height:16px;box-sizing:border-box;border:1px solid #8e8f8f;background:#f4f4f4;"></div><div class="abs" style="left:189px;top:602px;width:12px;height:12px;box-sizing:border-box;border:1px solid #b6bac4;background:linear-gradient(135deg,#cfd3df 0%,#e2e5ec 50%,#f6f6f6 100%);"></div><svg class="abs" style="left:187px;top:600px" width="16" height="16" viewBox="0 0 16 16"><path d="M3.3 8.6 L5.6 7.3 L7.2 10.2 Q9.2 5.4 12.2 2.8 L13.2 3.8 Q10.2 7.6 7.9 13.2 L6.3 13.2 Z" fill="#33509f"/></svg>
<div class="t sl" style="left:205.5px;top:603px;letter-spacing:0.15px;">Read speed</div>
<div class="abs" style="left:166px;top:622px;width:205px;height:1px;background:#a0a0a0;"></div>
<div class="t sl" style="left:167.0px;top:635px;letter-spacing:0.17px;">Average:</div>
<div class="t sv" style="right:474.4px;top:635px;letter-spacing:0.28px;">18.8 MB/s</div>
<div class="t sl" style="left:167.0px;top:659px;letter-spacing:0.22px;">Minimum:</div>
<div class="t sv" style="right:474.4px;top:659px;letter-spacing:0.28px;">18.6 MB/s</div>
<div class="t sl" style="left:167.0px;top:682px;letter-spacing:0.1px;">Maximum:</div>
<div class="t sv" style="right:474.4px;top:682px;letter-spacing:0.28px;">18.8 MB/s</div>
<div class="t sl" style="left:167.0px;top:706px;letter-spacing:-0.1px;">Access time:</div>
<div class="t sv" style="right:474.4px;top:706px;letter-spacing:0.28px;">1.29 ms</div>
<div class="abs" style="left:437px;top:604px;width:8px;height:8px;box-sizing:border-box;border:1px solid #000;background:#ffee00;"></div>
<div class="abs" style="left:458px;top:600px;width:16px;height:16px;box-sizing:border-box;border:1px solid #8e8f8f;background:#f4f4f4;"></div><div class="abs" style="left:460px;top:602px;width:12px;height:12px;box-sizing:border-box;border:1px solid #b6bac4;background:linear-gradient(135deg,#cfd3df 0%,#e2e5ec 50%,#f6f6f6 100%);"></div><svg class="abs" style="left:458px;top:600px" width="16" height="16" viewBox="0 0 16 16"><path d="M3.3 8.6 L5.6 7.3 L7.2 10.2 Q9.2 5.4 12.2 2.8 L13.2 3.8 Q10.2 7.6 7.9 13.2 L6.3 13.2 Z" fill="#33509f"/></svg>
<div class="t sl" style="left:476.5px;top:603px;letter-spacing:0.39px;">Write speed</div>
<div class="abs" style="left:437px;top:622px;width:205px;height:1px;background:#a0a0a0;"></div>
<div class="t sl" style="left:438.0px;top:635px;letter-spacing:0.17px;">Average:</div>
<div class="t sv" style="right:199.4px;top:635px;letter-spacing:0.28px;">11.2 MB/s</div>
<div class="t sl" style="left:438.0px;top:659px;letter-spacing:0.22px;">Minimum:</div>
<div class="t sv" style="right:199.4px;top:659px;letter-spacing:0.28px;">10.9 MB/s</div>
<div class="t sl" style="left:438.0px;top:682px;letter-spacing:0.1px;">Maximum:</div>
<div class="t sv" style="right:199.4px;top:682px;letter-spacing:0.28px;">11.6 MB/s</div>
<div class="t sl" style="left:438.0px;top:706px;letter-spacing:-0.1px;">Access time:</div>
<div class="t sv" style="right:199.4px;top:706px;letter-spacing:0.28px;">3.67 ms</div>
<div class="btn" style="left:699px;top:697px;width:86px;height:28px;border-color:#3c7fb1;box-shadow:inset 0 0 0 1px #48d3f6, inset 0 0 0 2px #d8f4fc;"></div>
<div class="t" style="left:727.5px;top:705px;font-size:13px;letter-spacing:0.15px;">Start</div>
</body></html>
